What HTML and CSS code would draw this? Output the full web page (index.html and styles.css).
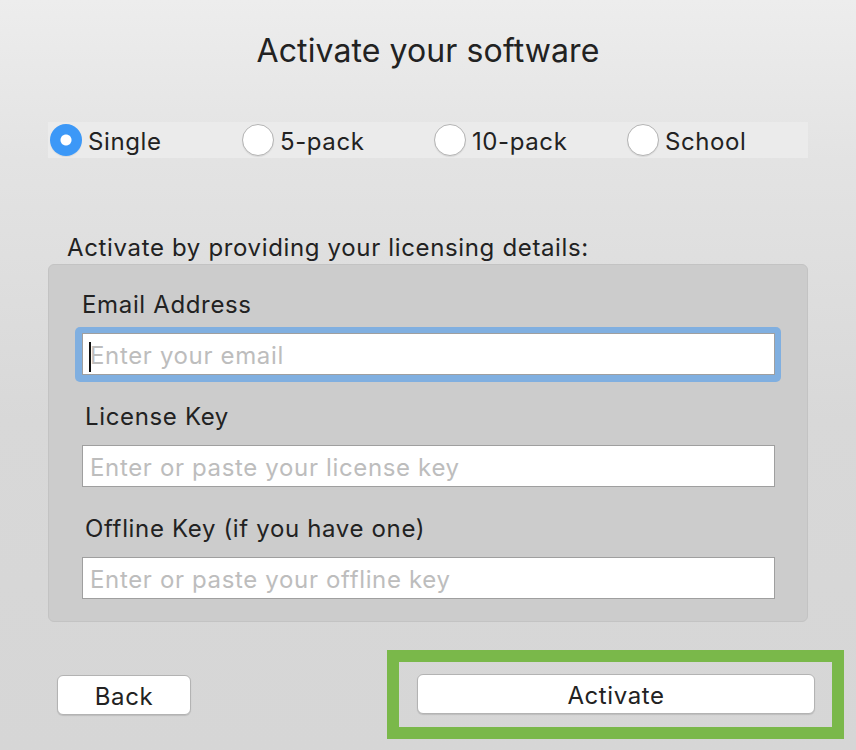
FILE: index.html
```html
<!DOCTYPE html>
<html lang="en">
<head>
  <meta charset="utf-8">
  <title>Activate your software</title>
  <link rel="stylesheet" href="styles.css">
</head>
<body>
  <div id="window">
    <div class="title">Activate your software</div>

    <div class="plans">
      <label class="plan">
        <span class="radio checked"></span>
        <span class="plan-name">Single</span>
      </label>
      <label class="plan">
        <span class="radio"></span>
        <span class="plan-name">5-pack</span>
      </label>
      <label class="plan">
        <span class="radio"></span>
        <span class="plan-name">10-pack</span>
      </label>
      <label class="plan">
        <span class="radio"></span>
        <span class="plan-name">School</span>
      </label>
    </div>

    <div class="intro">Activate by providing your licensing details:</div>

    <div class="panel">
      <div class="field">
        <label class="field-label email-label" for="email">Email Address</label>
        <div class="focus-ring">
          <input type="text" id="email" class="text-input" placeholder="Enter your email">
        </div>
      </div>
      <div class="field">
        <label class="field-label" for="license">License Key</label>
        <input type="text" id="license" class="text-input" placeholder="Enter or paste your license key">
      </div>
      <div class="field">
        <label class="field-label" for="offline">Offline Key (if you have one)</label>
        <input type="text" id="offline" class="text-input" placeholder="Enter or paste your offline key">
      </div>
    </div>

    <div class="actions">
      <button class="button back-button">Back</button>
      <div class="highlight">
        <button class="button activate-button">Activate</button>
      </div>
    </div>
  </div>
</body>
</html>
```

FILE: styles.css
```css
body,
html {
  margin: 0;
  padding: 0;
  height: 100%;
}

body {
  font-family: Inter, "Liberation Sans", Arial, sans-serif;
  color: #222222;
  background: linear-gradient(to bottom, #ededed 0, #e3e3e3 160px, #d8d8d8 420px, #d6d6d6 100%);
}

#window {
  width: 856px;
  height: 750px;
  overflow: hidden;
}

.title {
  margin-top: 31px;
  text-align: center;
  font-size: 32px;
  line-height: 40px;
  letter-spacing: 0.1px;
}

/* plan choice */

.plans {
  display: grid;
  grid-template-columns: 192px 192px 192px 1fr;
  align-items: center;
  margin: 51px 48px 0;
  height: 36px;
  background-color: #ebebeb;
}

.plan {
  display: flex;
  align-items: center;
  padding-left: 2px;
}

.plan:last-child {
  padding-left: 3px;
}

.radio {
  box-sizing: border-box;
  width: 32px;
  height: 32px;
  border-radius: 50%;
  background-color: #ffffff;
  border: 1px solid #b4b4b4;
  box-shadow: 0 1px 1px rgba(0, 0, 0, 0.08);
  margin-right: 6px;
  flex-shrink: 0;
}

.radio.checked {
  border: none;
  background: radial-gradient(circle, #ffffff 0, #ffffff 5px, #3c98f7 6px);
}

.plan-name {
  font-size: 24px;
  line-height: 32px;
  padding-top: 3px;
  letter-spacing: 0.6px;
}

/* licensing details */

.intro {
  margin: 76px 0 0 67px;
  font-size: 24px;
  line-height: 28px;
  letter-spacing: 0.65px;
}

.panel {
  margin: 2px 48px 0;
  padding: 25px 32px 22px 33px;
  background-color: #cccccc;
  border: 1px solid #c3c3c3;
  border-radius: 6px;
}

.field {
  display: flex;
  flex-direction: column;
  margin-bottom: 27px;
}

.field:last-child {
  margin-bottom: 0;
}

.field-label {
  font-size: 24px;
  line-height: 30px;
  letter-spacing: 0.65px;
  padding-left: 3px;
  margin-bottom: 13px;
}

.email-label {
  padding-left: 0;
  margin-bottom: 13px;
}

.text-input {
  box-sizing: border-box;
  width: 693px;
  height: 42px;
  margin: 0;
  padding: 3px 7px 0;
  border: 1px solid #9f9f9f;
  border-radius: 0;
  background-color: #ffffff;
  font-family: Inter, "Liberation Sans", Arial, sans-serif;
  font-size: 24px;
  letter-spacing: 0.65px;
  color: #222222;
  outline: none;
}

.text-input::placeholder {
  color: #bdbdbd;
}

.focus-ring {
  position: relative;
  width: 693px;
  margin: -6px 0 -7px -7px;
  padding: 6px 6px 7px 7px;
  border-radius: 5px;
  background-color: #80afe0;
}

/* fake caret, the field has focus */
.focus-ring::before {
  content: "";
  position: absolute;
  left: 14px;
  top: 15px;
  width: 2px;
  height: 30px;
  background-color: #111111;
}

/* buttons */

.actions {
  display: flex;
  align-items: center;
  margin-top: 28px;
  padding-left: 57px;
}

.button {
  box-sizing: border-box;
  height: 40px;
  padding: 3px 0 0;
  background-color: #ffffff;
  border: 1px solid #b3b3b3;
  border-radius: 6px;
  box-shadow: 0 1px 1px rgba(0, 0, 0, 0.12);
  font-family: Inter, "Liberation Sans", Arial, sans-serif;
  font-size: 24px;
  letter-spacing: 0.6px;
  color: #222222;
  cursor: pointer;
}

.back-button {
  width: 134px;
}

.highlight {
  margin-left: 196px;
  width: 457px;
  height: 89px;
  box-sizing: border-box;
  padding: 12px 17px 14px 18px;
  border: 12px solid #7ab84a;
  display: flex;
  align-items: center;
}

.activate-button {
  width: 398px;
}
```
